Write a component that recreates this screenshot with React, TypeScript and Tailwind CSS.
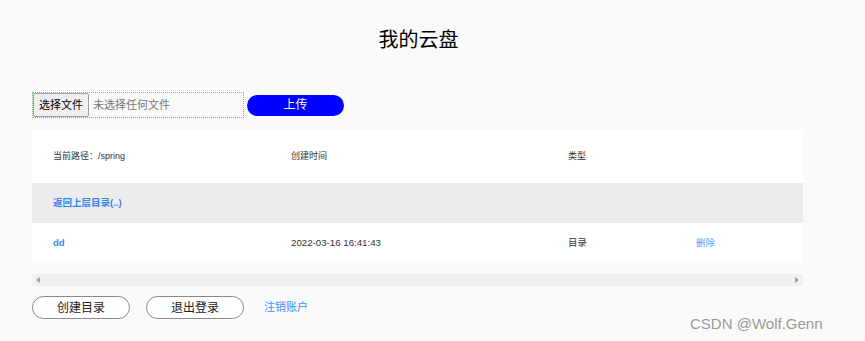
import React from "react";

const font = { fontFamily: '"Liberation Sans", "Noto Sans CJK SC", Arial, sans-serif' };

export default function App() {
  return (
    <div className="w-[865px] h-[341px] bg-[#fafafa] relative overflow-hidden text-[#333]" style={font}>
      <div className="w-[837px] pt-[28px] text-center text-[20px] leading-[24px] text-black">我的云盘</div>

      <div className="pl-[32px] pt-[40px] flex items-center">
        <div className="w-[212px] h-[26px] border border-dotted border-[#6cc46c] flex items-center">
          <div className="h-[24px] px-[5px] bg-[#efefef] border border-[#a0a0a0] rounded-[2px] flex items-center text-[11px] text-black">选择文件</div>
          <div className="pl-[4px] text-[11px] text-[#757575]">未选择任何文件</div>
        </div>
        <div className="ml-[3px] w-[97px] h-[21px] rounded-full bg-[#0000ff] text-white text-[12px] flex items-center justify-center">上传</div>
      </div>

      <div className="ml-[32px] mt-[12px] w-[771px] bg-white text-[9px]">
        <div className="grid grid-cols-[238px_277px_128px_1fr] h-[53px] items-center text-[#333]">
          <div className="pl-[21px]">当前路径：/spring</div>
          <div className="pl-[21px]">创建时间</div>
          <div className="pl-[21px]">类型</div>
          <div className="pl-[21px]"></div>
        </div>
        <div className="grid grid-cols-[238px_277px_128px_1fr] h-[40px] items-center bg-[#ececec]">
          <div className="pl-[21px] font-bold text-[#2f86f6] text-[9.5px]">返回上层目录(..)</div>
        </div>
        <div className="grid grid-cols-[238px_277px_128px_1fr] h-[40px] items-center">
          <div className="pl-[21px] font-bold text-[#2f86f6] text-[9.5px]">dd</div>
          <div className="pl-[21px] text-[#333] text-[9.7px]">2022-03-16 16:41:43</div>
          <div className="pl-[21px] text-[#333] text-[9.5px]">目录</div>
          <div className="pl-[21px] text-[#5a9cff] text-[9.5px]">删除</div>
        </div>
      </div>

      <div className="ml-[32px] mt-[11px] w-[771px] h-[12px] bg-[#f1f1f1] flex items-center justify-between px-[4px]">
        <svg width="4" height="6" viewBox="0 0 4 6"><path d="M4 0 L0 3 L4 6 Z" fill="#a3a3a3" /></svg>
        <svg width="4" height="6" viewBox="0 0 4 6"><path d="M0 0 L4 3 L0 6 Z" fill="#a3a3a3" /></svg>
      </div>

      <div className="pl-[32px] mt-[10px] flex items-center">
        <div className="w-[98px] h-[23px] rounded-full border border-[#8a8a8a] bg-white flex items-center justify-center text-[12px] text-[#222]">创建目录</div>
        <div className="ml-[16px] w-[98px] h-[23px] rounded-full border border-[#8a8a8a] bg-white flex items-center justify-center text-[12px] text-[#222]">退出登录</div>
        <div className="ml-[20px] text-[11px] text-[#3d8cff]">注销账户</div>
      </div>

      <div className="absolute left-[690px] top-[314px] text-[15px] leading-[20px] text-[#999]" style={{ textShadow: "0 0 1px #fff" }}>CSDN @Wolf.Genn</div>
    </div>
  );
}
